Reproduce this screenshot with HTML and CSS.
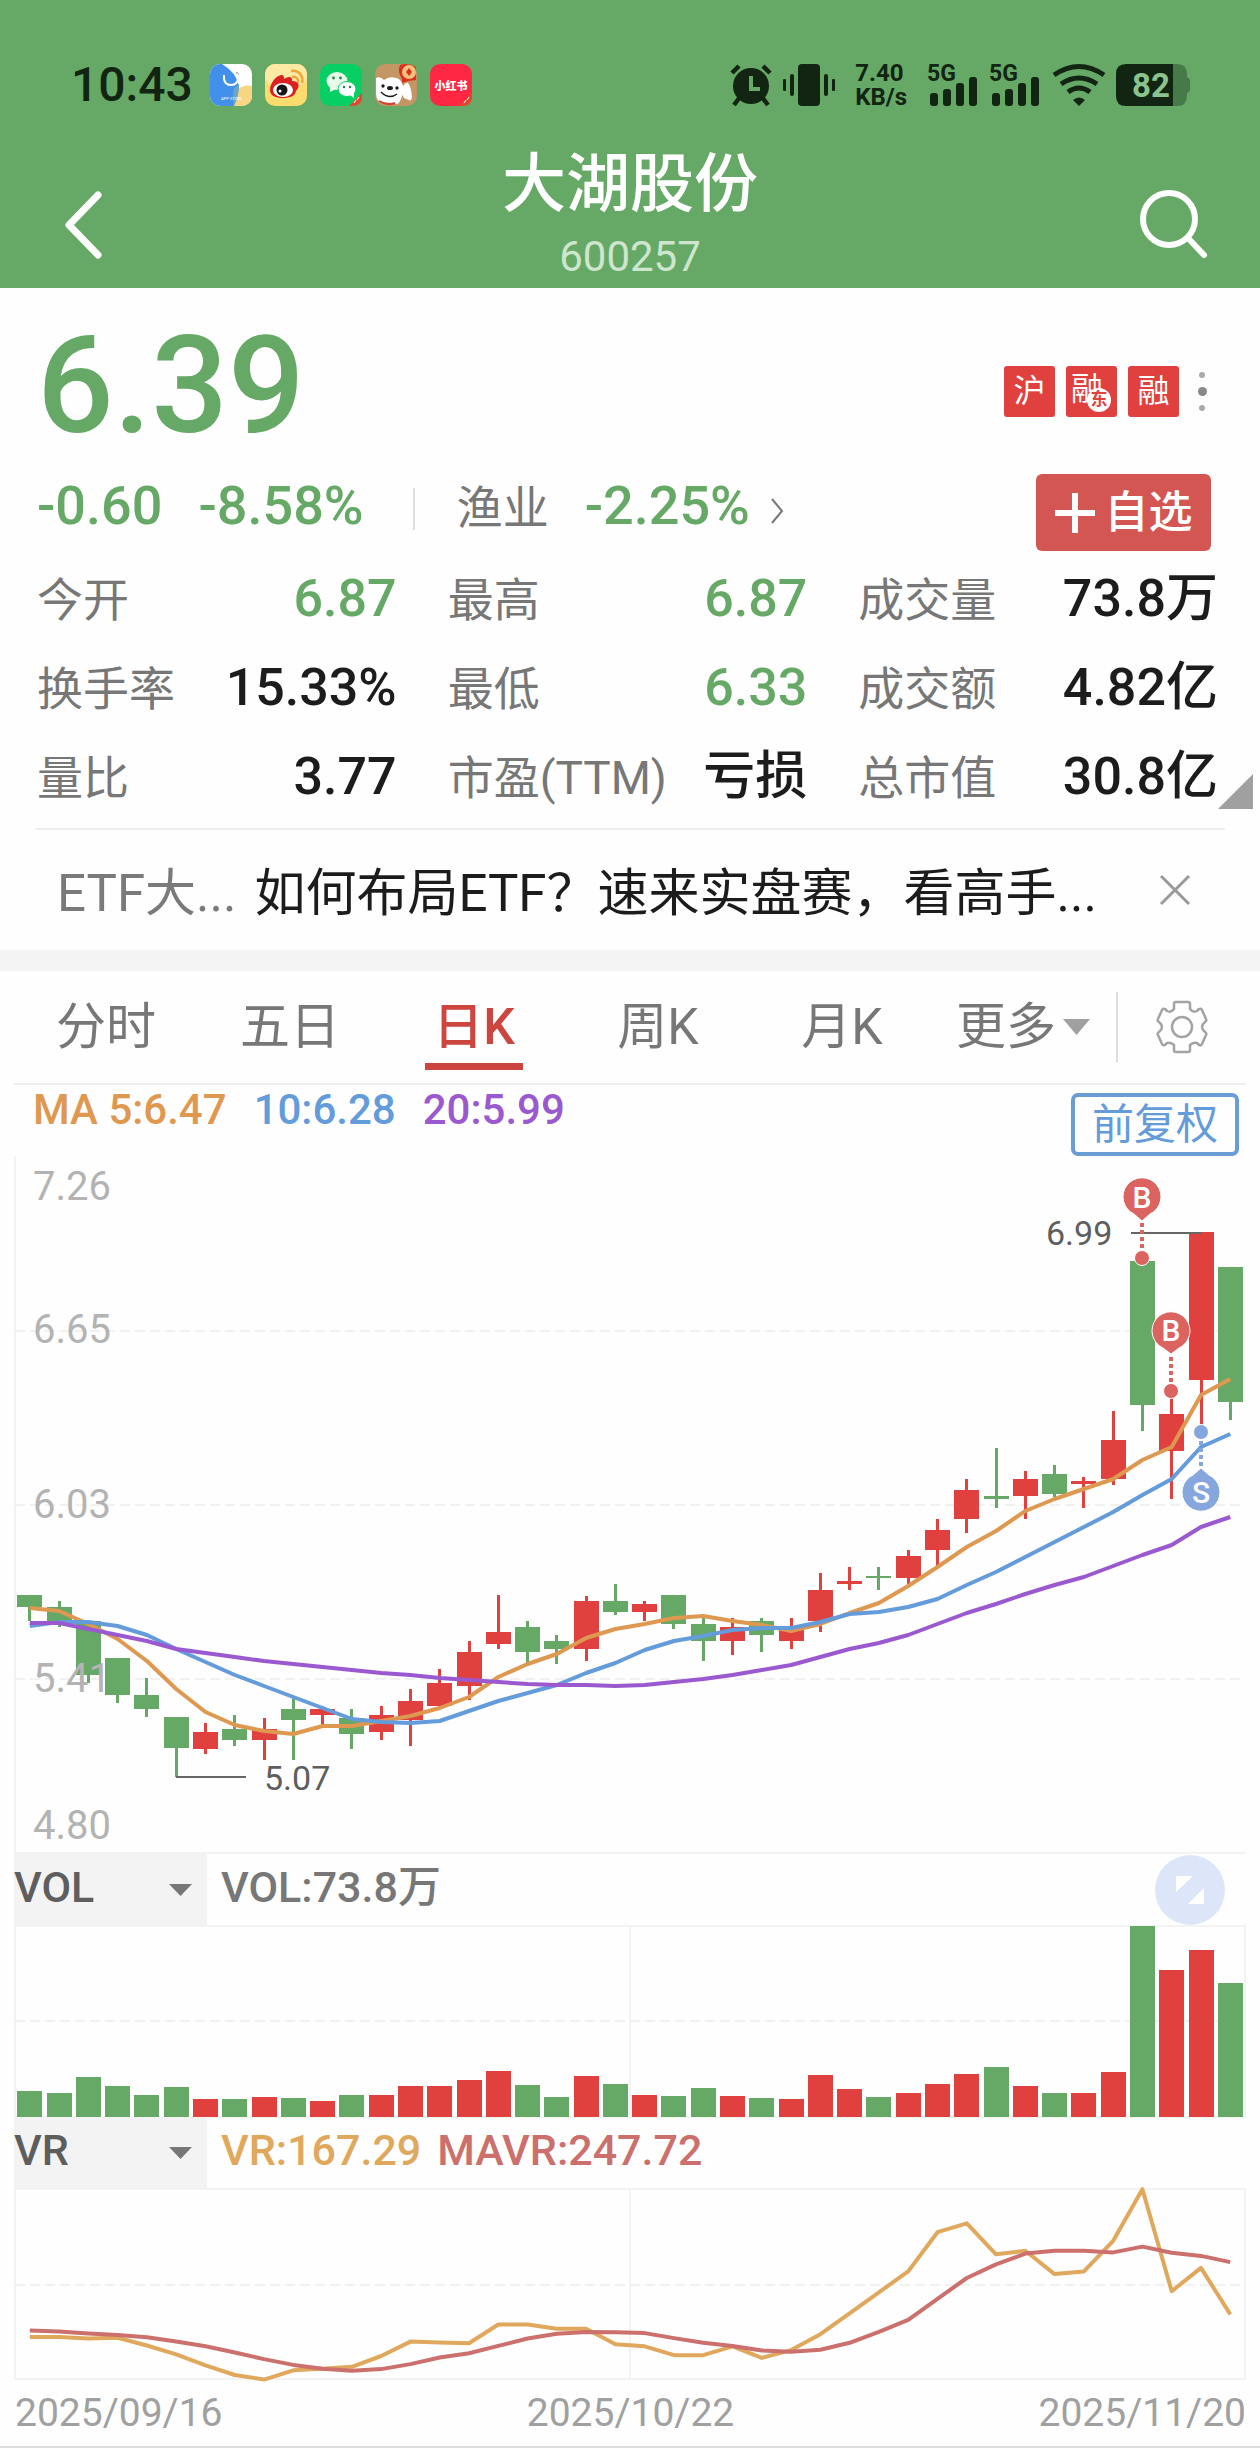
FILE: index.html
```html
<!DOCTYPE html>
<html lang="zh-CN">
<head>
<meta charset="utf-8">
<meta name="viewport" content="width=device-width, initial-scale=1">
<title>大湖股份 600257</title>
<link rel="stylesheet" href="styles.css">
</head>
<body>
<header class="header">
  <div class="status">
    <span class="clock">10:43</span>
    <div class="apps">
      <svg viewBox="0 0 42 42" aria-hidden="true"><clipPath id="r"><rect width="42" height="42" rx="10"/></clipPath><g clip-path="url(#r)"><rect width="42" height="42" fill="#fff"/><path d="M0 0h12q14 8 17 22 1 8-5 20H0z" fill="#4390ea"/><path d="M27 26q6-6 15-4v20H24q-1-8 3-16z" fill="#f8d583"/><path d="M24 24q3-3 5-3 0 12-5 21-2-10 0-18z" fill="#6ba8c8"/><path d="M14 11v4q1 6 7 6t7-6v-4" fill="none" stroke="#fff" stroke-width="2"/><path d="M26 10l1-2 2 3" fill="none" stroke="#9ab" stroke-width="1"/></g><text x="11" y="36" font-size="4" fill="#fff">APP STORE</text></svg>
      <svg viewBox="0 0 42 42" aria-hidden="true"><rect width="42" height="42" rx="10" fill="#fbdc6c"/><rect width="42" height="22" rx="10" fill="#fbe9a4"/><path d="M5 26c0-7 6-14 11-15 3 0 3 2 3 4 4-3 9-3 8 2 8 0 8 6 4 10-1 5-6 7-13 7S5 32 5 26z" fill="#dc2020"/><ellipse cx="18" cy="26" rx="10" ry="7" fill="#fff"/><circle cx="17" cy="26" r="5.500" fill="#151515"/><circle cx="15" cy="27" r="1.500" fill="#fff"/><path d="M27 13c4-1 7 2 6 6M26 7c7-1 13 4 11 12" fill="none" stroke="#f0a73a" stroke-width="2.500"/></svg>
      <svg viewBox="0 0 42 42" aria-hidden="true"><rect width="42" height="42" rx="10" fill="#06cf63"/><ellipse cx="17" cy="17" rx="10.500" ry="9" fill="#e8fbe9"/><path d="M10 22l0 6 6-3z" fill="#e8fbe9"/><ellipse cx="27" cy="25" rx="9" ry="7.500" fill="#fff" stroke="#06cf63"/><path d="M30 31l4 3v-5z" fill="#fff"/><g fill="#258048"><circle cx="13.500" cy="14" r="1.400"/><circle cx="20.500" cy="14" r="1.400"/><circle cx="24" cy="23" r="1.200"/><circle cx="30" cy="23" r="1.200"/></g><path d="M42 29v4q0 9-10 9h-3z" fill="#e2472d"/><path d="M34 39l2-3M37 36l2-3" stroke="#fff" stroke-width="1"/></svg>
      <svg viewBox="0 0 42 42" aria-hidden="true"><rect width="42" height="42" rx="10" fill="#c39664"/><path d="M1 14q4-2 8 2 5-4 12-2c5 1 6 5 7 8 0 10-2 14-5 18H10Q1 38 1 30z" fill="#fff"/><path d="M28 22q3-4 5-3 3 3 4 14-1 5-3 3l-5-2-4-7z" fill="#fff"/><path d="M4 37q8 5 16 2" fill="none" stroke="#d6402e" stroke-width="2"/><ellipse cx="15" cy="24" rx="3" ry="2" fill="#1b1b1b"/><circle cx="8" cy="22" r="1.700" fill="#1b1b1b"/><circle cx="22" cy="24" r="1.700" fill="#1b1b1b"/><path d="M6 28q8 8 16 2" fill="none" stroke="#1b1b1b" stroke-width="1.500"/><path d="M25 1q8-3 16 2v13l-8 1-6 2v-4q-5-8-2-14z" fill="#d8321f"/><circle cx="34" cy="8" r="7" fill="#f7c07c"/><path d="M34 4l3 4-3 4-3-4z" fill="#d8321f"/></svg>
      <svg viewBox="0 0 42 42" aria-hidden="true"><rect width="42" height="42" rx="10" fill="#ff2742"/><text x="21" y="26" font-size="11" font-weight="900" fill="#fff" text-anchor="middle">小红书</text><path d="M42 29v4q0 9-10 9h-3z" fill="#e2472d"/><path d="M34 39l2-3M37 36l2-3" stroke="#fff" stroke-width="1"/></svg>
    </div>
    <div class="device">
      <svg class="alarm" viewBox="0 0 42 42" aria-hidden="true"><g fill="none" stroke="#122412" stroke-width="4.500"><path d="M2 9l7-7M40 9l-7-7" /><path d="M10 33l-6 8M32 33l6 8"/></g><circle cx="21" cy="22" r="18" fill="#122412"/><path d="M21 12v13h9" fill="none" stroke="#66a866" stroke-width="4"/></svg>
      <svg class="vibrate" viewBox="0 0 52 42" aria-hidden="true"><g fill="#122412"><rect x="15" width="22" height="42" rx="4"/><rect x="7" y="10" width="4" height="22" rx="2"/><rect x="41" y="10" width="4" height="22" rx="2"/><rect y="15" width="3" height="12" rx="1"/><rect x="49" y="15" width="3" height="12" rx="1"/></g></svg>
      <div class="speed"><span>7.40</span><span>KB/s</span></div>
      <svg class="signal" viewBox="0 0 51 42" aria-hidden="true"><text x="0" y="17" font-size="23" font-weight="700" fill="#122412">5G</text><g fill="#122412"><rect x="3" y="29" width="8" height="13" rx="3"/><rect x="16" y="25" width="8" height="17" rx="3"/><rect x="29" y="19" width="8" height="23" rx="3"/><rect x="42" y="13" width="8" height="29" rx="3"/></g></svg>
      <svg class="signal" viewBox="0 0 51 42" aria-hidden="true"><text x="0" y="17" font-size="23" font-weight="700" fill="#122412">5G</text><g fill="#122412"><rect x="3" y="29" width="8" height="13" rx="3"/><rect x="16" y="25" width="8" height="17" rx="3"/><rect x="29" y="19" width="8" height="23" rx="3"/><rect x="42" y="13" width="8" height="29" rx="3"/></g></svg>
      <svg class="wifi" viewBox="0 0 52 42" aria-hidden="true"><g fill="none" stroke="#122412" stroke-width="5"><path d="M1 11Q26-6 51 11"/><path d="M8 20Q26 8 44 20"/><path d="M15 28Q26 20 37 28"/></g><path d="M20 36q6-5 12 0l-6 6z" fill="#122412"/></svg>
      <svg class="battery" viewBox="0 0 74 42" aria-hidden="true"><path d="M57 0h4q10 0 10 10v3q3 1 3 4v8q0 3-3 4v3q0 10-10 10h-4z" fill="#467a48"/><path d="M10 0h47v42H10Q0 42 0 32V10Q0 0 10 0z" fill="#122412"/><text x="16" y="33" font-size="33" font-weight="700" fill="#8cc28c">82</text></svg>
    </div>
  </div>
  <nav class="topbar">
    <button class="icon-btn back" aria-label="返回"><svg viewBox="0 0 38 68" aria-hidden="true"><path d="M34 4L5 34l29 30" fill="none" stroke="#fff" stroke-width="7" stroke-linecap="round" stroke-linejoin="round"/></svg></button>
    <div class="heading"><h1>大湖股份</h1><p>600257</p></div>
    <button class="icon-btn search" aria-label="搜索"><svg viewBox="0 0 68 70" aria-hidden="true"><g fill="none" stroke="#fff" stroke-width="6" stroke-linecap="round"><circle cx="29" cy="30" r="26"/><path d="M48 49l16 17"/></g></svg></button>
  </nav>
</header>

<main>
<section class="quote">
  <div class="price-row">
    <strong class="price">6.39</strong>
    <div class="badges">
      <span class="badge">沪</span>
      <span class="badge east">融<i>东</i></span>
      <span class="badge">融</span>
      <button class="dots" aria-label="更多标签"><span></span><span></span><span></span></button>
    </div>
  </div>
  <div class="change-row">
    <span class="num down">-0.60</span>
    <span class="num down pct">-8.58%</span>
    <a class="industry" href="#industry"><span class="lbl">渔业</span><span class="num down">-2.25%</span><svg viewBox="0 0 14 26" aria-hidden="true"><path d="M2 1l10 12L2 25" fill="none" stroke="#777" stroke-width="2"/></svg></a>
    <button class="add"><svg viewBox="0 0 40 40" aria-hidden="true"><path d="M20 0v40M0 20h40" stroke="#fff" stroke-width="6"/></svg>自选</button>
  </div>
  <dl class="stats">
    <div><dt>今开</dt><dd class="down">6.87</dd></div>
    <div><dt>最高</dt><dd class="down">6.87</dd></div>
    <div><dt>成交量</dt><dd>73.8万</dd></div>
    <div><dt>换手率</dt><dd>15.33%</dd></div>
    <div><dt>最低</dt><dd class="down">6.33</dd></div>
    <div><dt>成交额</dt><dd>4.82亿</dd></div>
    <div><dt>量比</dt><dd>3.77</dd></div>
    <div><dt>市盈(TTM)</dt><dd>亏损</dd></div>
    <div><dt>总市值</dt><dd>30.8亿</dd></div>
  </dl>
  <button class="expand" aria-label="展开行情"></button>
</section>

<aside class="notice">
  <span class="notice-tag">ETF大...</span>
  <a href="#notice">如何布局ETF？速来实盘赛，看高手...</a>
  <button class="close" aria-label="关闭"><svg viewBox="0 0 30 30" aria-hidden="true"><path d="M1 1l28 28M29 1L1 29" stroke="#999" stroke-width="3"/></svg></button>
</aside>

<section class="chart">
  <div class="tabs">
    <button>分时</button>
    <button>五日</button>
    <button class="on" aria-current="true">日K</button>
    <button>周K</button>
    <button>月K</button>
    <button class="more">更多<svg viewBox="0 0 27 16" aria-hidden="true"><path d="M0 0h27L13.500 16z" fill="#a0a0a0"/></svg></button>
    <button class="gear" aria-label="设置"><svg viewBox="0 0 50 52" aria-hidden="true"><g fill="none" stroke="#a3a3a3" stroke-width="2.500" stroke-linejoin="round"><path d="M17 3q0-2 2-2h12q2 0 2 2v5q3 4 7 2l2-2q2-1 3 1l4 9q1 2-1 3-6 5 0 10 2 1 1 3l-4 9q-1 2-3 1l-2-2q-4-1-7 2v5q0 2-2 2H19q-2 0-2-2v-5q-3-3-7-2l-2 2q-2 1-3-1l-4-9q-1-2 1-3 6-5 0-10-2-1-1-3l4-9q1-2 3-1l2 2q4 2 7-2z"/><circle cx="25" cy="26" r="10"/></g></svg></button>
  </div>
  <div class="ma-row">
    <span class="ma5">MA 5:6.47</span>
    <span class="ma10">10:6.28</span>
    <span class="ma20">20:5.99</span>
    <button class="adjust">前复权</button>
  </div>

  <svg class="plot" viewBox="0 1154 1260 698" role="img" aria-label="日K线图">
    <path d="M15 1154V1852M14 1851H1246" class="frame"/>
    <path d="M15 1329H1245M15 1503H1245M15 1677H1245" class="grid"/>
    <g id="candles"></g>
    <g class="axis"><text x="33" y="1198">7.26</text><text x="33" y="1341">6.65</text><text x="33" y="1516">6.03</text><text x="33" y="1690">5.41</text><text x="33" y="1837">4.80</text></g>
    <g id="averages"></g>
    <path d="M1131 1231H1201M176 1775H246" class="leader"/>
    <g class="extreme"><text x="1046" y="1243">6.99</text><text x="264" y="1788">5.07</text></g>
    <g class="buy">
      <path d="M1142 1221V1248" class="dotted"/><circle cx="1142" cy="1256" r="7.500"/>
      <path d="M1142 1219l-8-7a19 19 0 1 1 16 0z"/><text x="1142" y="1206">B</text>
      <path d="M1171 1355V1382" class="dotted"/><circle cx="1171" cy="1389" r="7.500"/>
      <path d="M1171 1352l-8-6a19 19 0 1 1 16 0z"/><text x="1171" y="1339">B</text>
    </g>
    <g class="sell">
      <path d="M1201 1439V1465" class="dotted"/><circle cx="1201" cy="1430" r="7.500"/>
      <path d="M1201 1466l-8 7a19 19 0 1 0 16 0z"/><text x="1201" y="1501">S</text>
    </g>
  </svg>

  <div class="indicator">
    <select aria-label="副图一指标"><option>VOL</option></select>
    <span class="vol">VOL:73.8万</span>
    <button class="zoom" aria-label="全屏"><svg viewBox="0 0 70 70" aria-hidden="true"><circle cx="35" cy="35" r="35" fill="#dde6f8"/><path d="M21 21h17L21 37zM49 33v16H33z" fill="#fff"/></svg></button>
  </div>
  <svg class="plot" viewBox="0 0 1260 192" role="img" aria-label="成交量">
    <path d="M15 1H1245V192H15zM630 0V192" class="frame"/><path d="M15 96H1245" class="grid"/>
    <g id="volume"></g>
  </svg>

  <div class="indicator">
    <select aria-label="副图二指标"><option>VR</option></select>
    <span class="vr">VR:167.29</span>
    <span class="mavr">MAVR:247.72</span>
  </div>
  <svg class="plot" viewBox="0 0 1260 192" role="img" aria-label="VR指标">
    <path d="M15 1H1245V191H15zM630 0V191" class="frame"/><path d="M15 97H1245" class="grid"/>
    <g id="ratio"></g>
  </svg>
  <div class="dates"><time>2025/09/16</time><time>2025/10/22</time><time>2025/11/20</time></div>
</section>
</main>
<script src="chart.js"></script>
</body>
</html>
```
FILE: styles.css
```css
* { box-sizing: border-box; }
body {
  margin: 0;
  background: #fefefe;
  color: #1c1c1c;
  font-family: Roboto, "Noto Sans CJK SC", sans-serif;
}
h1, p, dl, dd { margin: 0; }
button { border: 0; padding: 0; background: none; color: inherit; font: inherit; cursor: pointer; }
a { color: inherit; text-decoration: none; }
svg { display: block; flex: none; overflow: visible; }
main { padding-bottom: 3px; }

/* header */
.header { background: #66a866; color: #fff; padding-bottom: 6px; }
.status { display: flex; align-items: center; height: 106px; padding: 64px 70px 0 71px; color: #122412; }
.clock { font-size: 48px; line-height: 42px; font-weight: 500; }
.apps { display: flex; gap: 13px; margin-left: 17px; }
.apps svg { width: 42px; height: 42px; }
.device { display: flex; align-items: center; gap: 11px; margin-left: auto; }
.alarm { width: 42px; height: 42px; }
.vibrate { width: 52px; height: 42px; }
.speed { display: flex; flex-direction: column; font-size: 24px; line-height: 24px; font-weight: 700; margin: 0 9px; }
.signal { width: 51px; height: 42px; }
.wifi { width: 52px; height: 42px; margin-left: 2px; }
.battery { width: 74px; height: 42px; }
.topbar { display: flex; align-items: flex-end; justify-content: space-between; padding: 41px 52px 0; }
.icon-btn { width: 68px; margin-bottom: 23px; }
.back svg { width: 38px; height: 68px; margin-left: 12px; }
.search svg { width: 68px; height: 70px; }
.heading { text-align: center; }
.heading h1 { font-size: 64px; line-height: 76px; font-weight: 500; }
.heading p { margin-top: 9px; font-size: 42px; line-height: 50px; color: #cde6cd; }

/* quote */
.quote { position: relative; padding: 28px 42px 6px 37px; }
.down { color: #66a866; }
.price-row { display: flex; justify-content: space-between; }
.price { font-size: 135px; line-height: 140px; font-weight: 500; color: #66a866; }
.badges { display: flex; align-items: center; gap: 11px; padding: 10px 4px 0 0; }
.badge { position: relative; width: 51px; height: 51px; border-radius: 3px; background: #e0403e; color: #fff; font-size: 32px; line-height: 50px; text-align: center; }
.east { text-align: left; padding-left: 5px; line-height: 46px; }
.east i { position: absolute; right: 6px; bottom: 5px; width: 24px; height: 24px; border-radius: 50%; background: #fff; color: #e0403e; font-size: 17px; line-height: 22px; font-style: normal; font-weight: 700; text-align: center; }
.dots { display: flex; flex-direction: column; align-items: center; gap: 9px; width: 24px; }
.dots span { width: 6px; height: 6px; border-radius: 50%; background: #aaa; }
.dots span:nth-child(2) { width: 9px; height: 9px; background: #888; }
.change-row { display: flex; align-items: flex-start; margin-top: 18px; line-height: 64px; }
.num { font-size: 54px; font-weight: 500; }
.pct { margin-left: 36px; }
.lbl { font-size: 46px; color: #777; }
.industry { display: flex; align-items: baseline; margin-left: 49px; padding-left: 44px; background: linear-gradient(#ddd, #ddd) 0 14px / 2px 42px no-repeat; }
.industry .num { margin-left: 36px; }
.industry svg { width: 14px; height: 26px; margin-left: 20px; }
.add { display: flex; align-items: center; justify-content: center; gap: 10px; width: 175px; height: 77px; margin: 0 7px 0 auto; border-radius: 6px; background: #d45652; color: #fff; font-size: 44px; font-weight: 500; }
.add svg { width: 40px; height: 40px; }
.stats { display: grid; grid-template-columns: repeat(3, 1fr); column-gap: 51px; margin-top: 4px; }
.stats div { display: flex; align-items: baseline; justify-content: space-between; line-height: 88px; white-space: nowrap; }
.stats dt { font-size: 46px; color: #777; }
.stats dd { font-size: 52px; font-weight: 500; }
.expand { position: absolute; right: 7px; bottom: 19px; width: 35px; height: 35px; background: #a0a0a0; clip-path: polygon(100% 0, 100% 100%, 0 100%); }

/* notice */
.notice { display: flex; align-items: center; gap: 18px; height: 122px; margin: 0 35px; padding: 8px 35px 0 22px; border-top: 2px solid #eee; font-size: 51px; line-height: 60px; white-space: nowrap; }
.notice-tag { color: #7a7a7a; }
.close { margin: 0 0 8px auto; }
.close svg { width: 30px; height: 30px; }

/* chart */
.chart { border-top: 21px solid #f4f4f4; border-bottom: 2px solid #ddd; }
.tabs { display: grid; grid-template-columns: repeat(5, 1fr) 184px 128px; align-items: center; height: 114px; margin: 0 14px; border-bottom: 2px solid #eee; font-size: 50px; color: #777; }
.tabs button { line-height: 70px; }
.tabs .on { color: #cc453f; font-weight: 500; background: linear-gradient(#cc453f, #cc453f) 50% 100% / 98px 7px no-repeat; padding: 8px 0; }
.tabs .more { display: flex; align-items: center; gap: 7px; padding-left: 22px; border-right: 2px solid #ddd; }
.more svg { width: 27px; height: 16px; }
.gear { display: grid; place-items: center; }
.gear svg { width: 50px; height: 52px; }
.ma-row { display: flex; gap: 27px; height: 71px; padding: 0 21px 0 33px; font-size: 42px; line-height: 50px; font-weight: 500; }
.ma5 { color: #de9850; }
.ma10 { color: #639bdb; }
.ma20 { color: #9b59d0; }
.adjust { width: 168px; height: 63px; margin: 8px 0 0 auto; border: 4px solid #6a9cd6; border-radius: 7px; color: #639bdb; font-weight: 400; }
.plot { width: 100%; height: auto; }
.frame { fill: none; stroke: #f3f3f3; stroke-width: 2; }
.grid { fill: none; stroke: #f1f1f1; stroke-width: 2; stroke-dasharray: 10 5; }
.axis { font-size: 40px; fill: #b3b3b3; }
.extreme { font-size: 34px; fill: #5e5e5e; }
.leader { fill: none; stroke: #666; stroke-width: 2; }
.rise { fill: #e0403e; }
.fall { fill: #66a866; }
.line { fill: none; stroke-width: 4; stroke-linejoin: round; }
.line-ma5 { stroke: #de9850; }
.line-ma10 { stroke: #639bdb; }
.line-ma20 { stroke: #9b59d0; }
.line-vr { stroke: #e0a85c; }
.line-mavr { stroke: #cb706c; }
.buy, .sell { stroke: #fff; stroke-width: 1; }
.buy { fill: #db6360; }
.sell { fill: #86a6de; }
.buy text, .sell text { fill: #fff; stroke: none; font-size: 30px; font-weight: 500; text-anchor: middle; }
.dotted { stroke-width: 4; stroke-dasharray: 4 3; }
.buy .dotted { stroke: #db6360; }
.sell .dotted { stroke: #86a6de; }
.indicator { display: flex; height: 71px; padding: 0 35px 0 14px; font-size: 43px; line-height: 66px; font-weight: 500; }
.indicator select { appearance: none; width: 193px; height: 71px; margin-right: 14px; padding: 0 0 6px; border: 0; border-radius: 0; background: #f3f3f3 url("data:image/svg+xml,%3Csvg xmlns='http://www.w3.org/2000/svg' width='23' height='12'%3E%3Cpath d='M0 0h23L11.5 12z' fill='%23777'/%3E%3C/svg%3E") 155px 30px no-repeat; color: #5e5e5e; font: inherit; }
.vol { color: #777; }
.vr { color: #e0a85c; }
.mavr { margin-left: 16px; color: #cb706c; }
.zoom { margin-left: auto; }
.zoom svg { width: 70px; height: 70px; }
.dates { display: flex; justify-content: space-between; padding: 0 14px 0 15px; font-size: 39px; line-height: 66px; color: #a0a0a0; }
```
FILE: chart.js
```js
const NS = "http://www.w3.org/2000/svg";
const FIRST = 29.8;
const STEP = 29.28;
const BODY = 25;
const x = i => FIRST + i * STEP;

function draw(parent, tag, attrs) {
  const el = document.createElementNS(NS, tag);
  for (const key in attrs) el.setAttribute(key, attrs[key]);
  parent.appendChild(el);
}

function line(parent, points, name, y) {
  draw(parent, "polyline", {
    class: "line " + name,
    points: points.map((v, i) => x(i).toFixed(1) + "," + y(v).toFixed(1)).join(" ")
  });
}

// direction, high, body top, body bottom, low, volume height
const days = [
  ["g",1593,1593,1605,1619,26],["g",1599,1605,1619,1625,24],["g",1619,1619,1673,1681,40],
  ["g",1656,1656,1693,1701,31],["g",1676,1693,1707,1715,22],["g",1715,1715,1746,1775,30],
  ["r",1721,1730,1747,1752,18],["g",1713,1727,1738,1744,18],["r",1716,1727,1738,1758,20],
  ["g",1696,1707,1718,1758,19],["r",1704,1707,1713,1723,16],["g",1707,1716,1732,1747,22],
  ["r",1704,1713,1730,1738,22],["r",1687,1699,1718,1744,31],["r",1667,1681,1704,1704,31],
  ["r",1639,1650,1684,1698,37],["r",1593,1630,1642,1647,46],["g",1619,1625,1650,1662,32],
  ["g",1633,1639,1647,1662,20],["r",1594,1599,1647,1659,41],["g",1582,1599,1610,1613,33],
  ["r",1599,1602,1610,1619,22],["g",1593,1593,1622,1627,21],["g",1616,1622,1639,1659,29],
  ["r",1616,1625,1639,1653,21],["g",1616,1619,1633,1650,19],["r",1616,1628,1639,1647,18],
  ["r",1571,1588,1619,1630,42],["r",1565,1579,1582,1588,28],["g",1565,1574,1576,1588,20],
  ["r",1548,1554,1576,1582,24],["r",1517,1528,1548,1565,33],["r",1477,1488,1517,1531,43],
  ["g",1446,1494,1497,1506,50],["r",1469,1477,1494,1517,31],["g",1463,1472,1492,1495,24],
  ["r",1475,1479,1482,1506,24],["r",1409,1438,1477,1483,45],["g",1259,1259,1403,1429,191],
  ["r",1389,1412,1449,1497,147],["r",1230,1230,1378,1427,167],["g",1265,1265,1400,1418,134]
];

const ma5 = [1606,1609,1622,1637,1659,1687,1710,1723,1729,1732,1724,1724,1719,1714,1706,1695,1675,1662,1652,1636,1627,1622,1616,1614,1619,1623,1629,1622,1611,1601,1584,1565,1545,1529,1509,1497,1487,1477,1458,1445,1393,1377];
const ma10 = [1624,1620,1620,1624,1633,1647,1660,1673,1684,1695,1706,1717,1720,1721,1719,1709,1699,1691,1683,1671,1661,1648,1639,1634,1628,1626,1626,1620,1612,1610,1605,1597,1583,1570,1555,1540,1525,1510,1493,1477,1445,1432];
const ma20 = [1621,1621,1627,1633,1639,1647,1651,1655,1659,1662,1665,1668,1671,1673,1676,1678,1680,1682,1683,1683,1684,1683,1680,1677,1673,1668,1663,1655,1647,1641,1633,1622,1611,1602,1592,1583,1575,1564,1553,1543,1525,1515];

// depth below the top of the panel, full height = 495
const vr = [384,384,388,386,406,429,457,482,494,470,466,461,433,396,398,400,352,352,363,363,403,408,431,431,408,438,418,377,323,269,215,114,91,171,162,222,215,136,3,266,206,326];
const mavr = [367,370,375,379,385,396,408,424,441,456,466,471,467,454,437,426,407,388,376,371,372,374,387,399,407,419,422,417,399,371,340,286,232,197,169,162,162,166,151,167,175,191];

const candles = document.getElementById("candles");
const volume = document.getElementById("volume");
days.forEach(([dir, high, top, bottom, low, vol], i) => {
  const name = dir === "r" ? "rise" : "fall";
  const left = Math.round(x(i) - BODY / 2);
  draw(candles, "rect", { class: name, x: left + 11, y: high, width: 3, height: low - high });
  draw(candles, "rect", { class: name, x: left, y: top, width: BODY, height: bottom - top });
  draw(volume, "rect", { class: name, x: left, y: 192 - vol, width: BODY, height: vol });
});

const averages = document.getElementById("averages");
const ratio = document.getElementById("ratio");
line(averages, ma5, "line-ma5", v => v);
line(averages, ma10, "line-ma10", v => v);
line(averages, ma20, "line-ma20", v => v);
line(ratio, vr, "line-vr", v => v / 495 * 192);
line(ratio, mavr, "line-mavr", v => v / 495 * 192);
```
